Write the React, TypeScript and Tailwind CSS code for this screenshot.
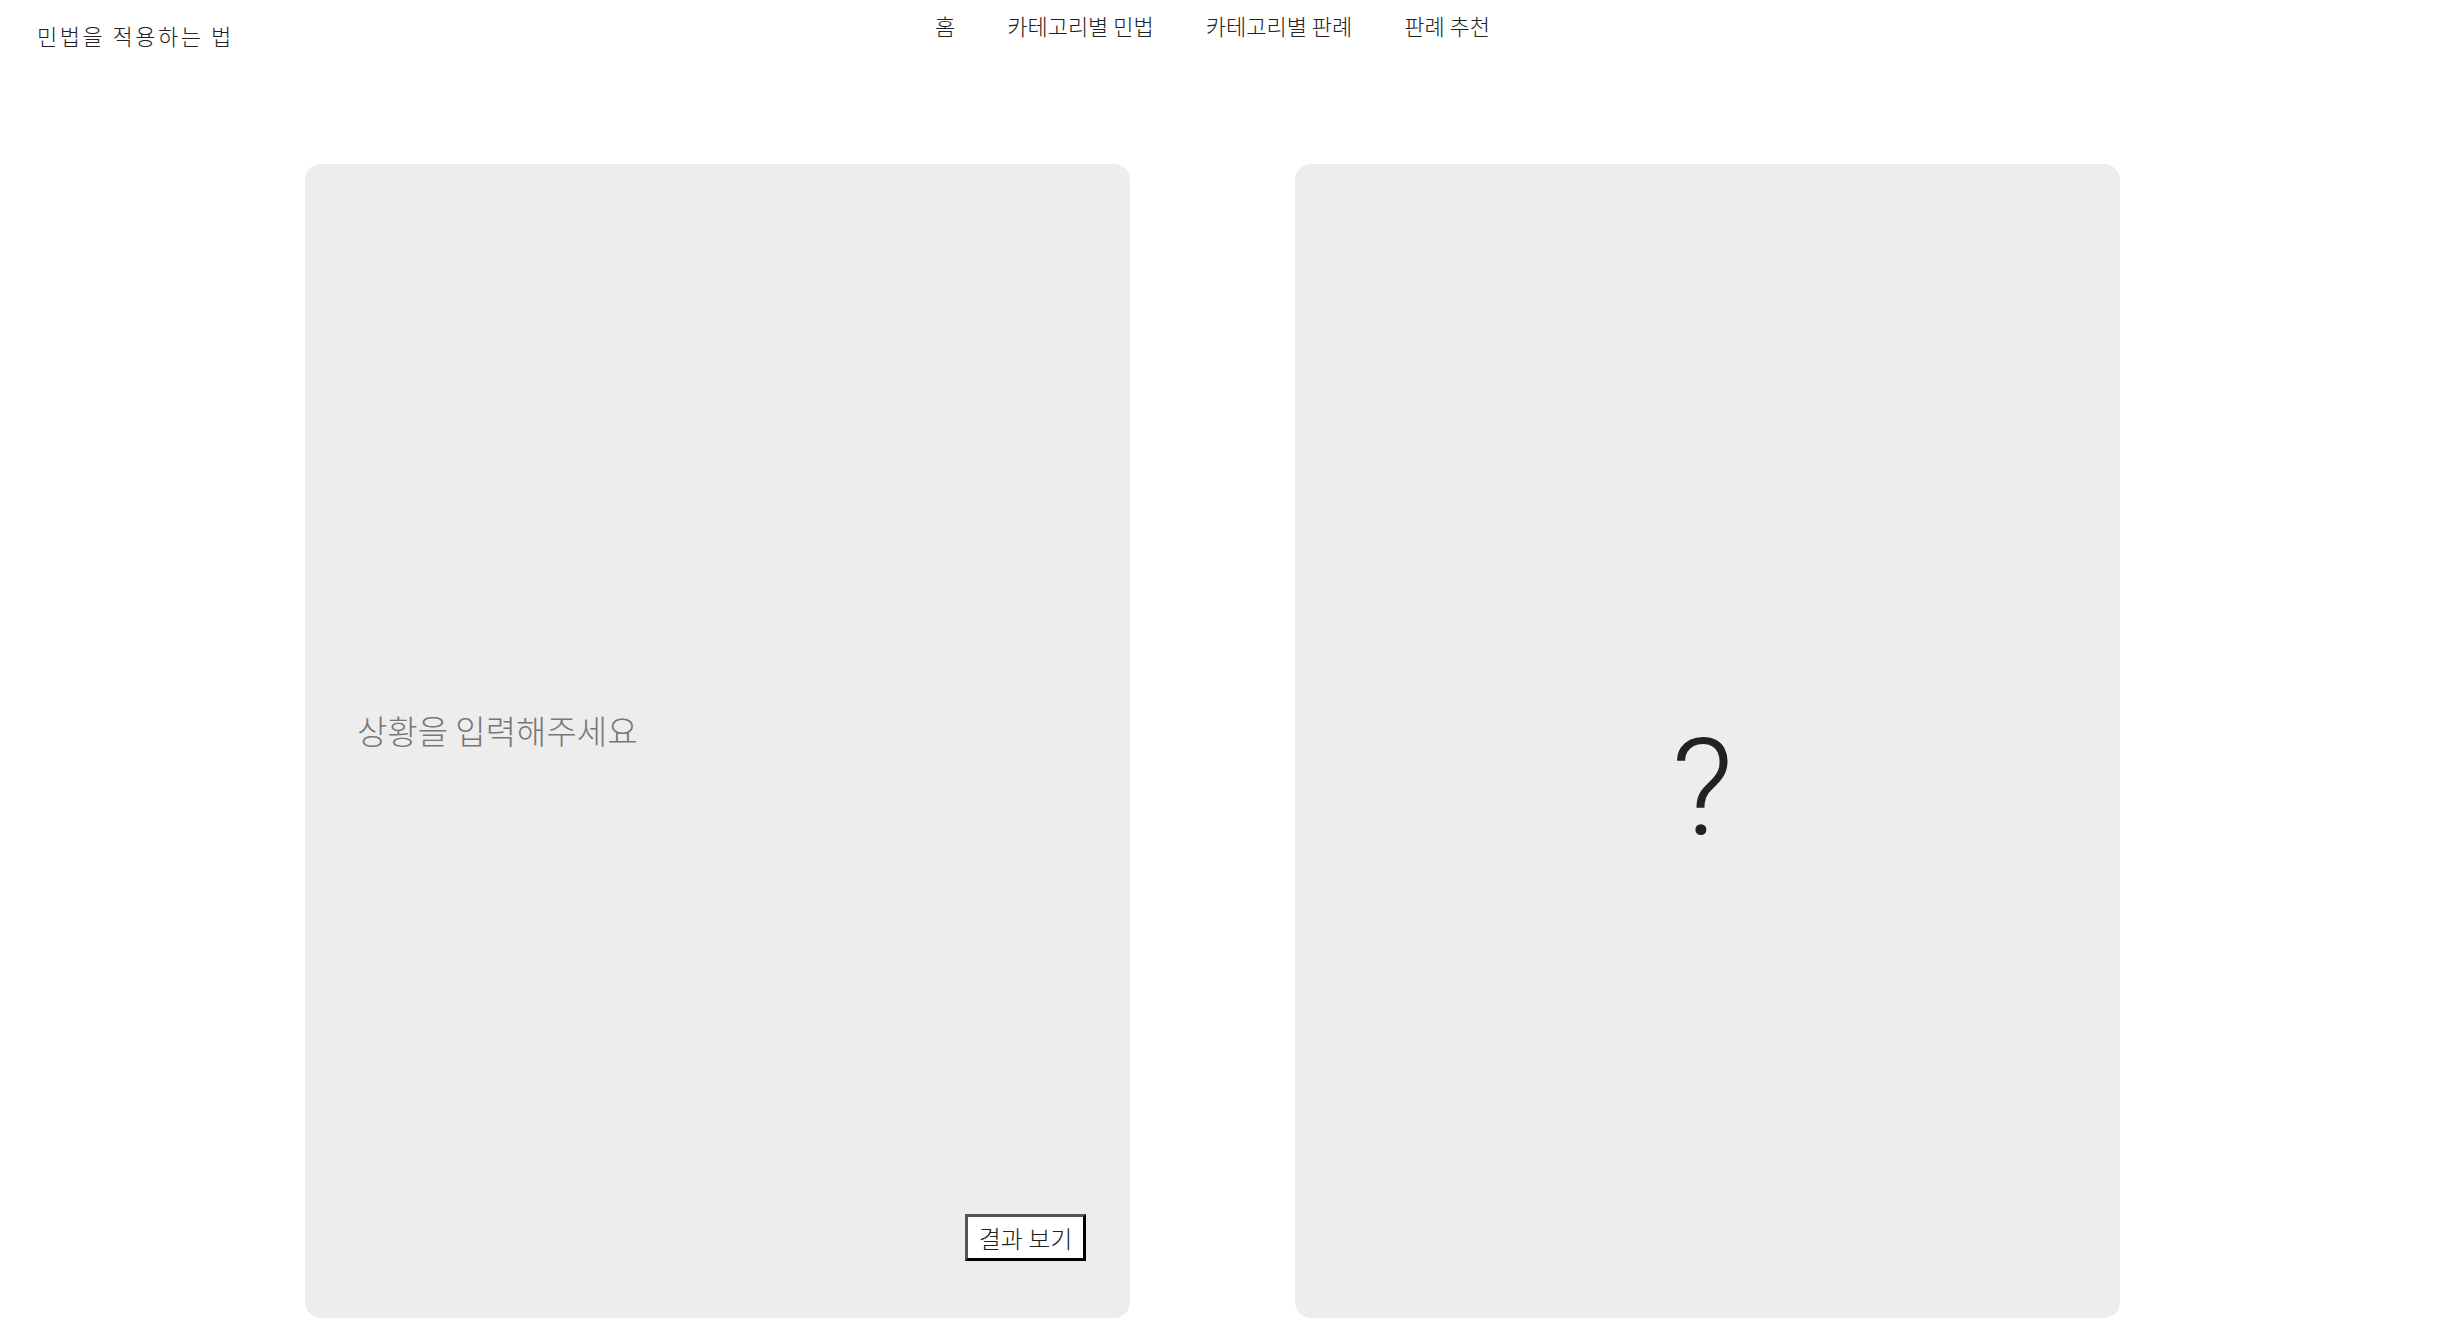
import React, { useState } from "react";

const navItems = ["홈", "카테고리별 민법", "카테고리별 판례", "판례 추천"];

export default function App() {
  const [situation, setSituation] = useState("");

  return (
    <div className="w-[2425px] bg-white text-[#222] font-['Noto_Sans_CJK_KR',sans-serif]">
      {/* 상단 헤더 */}
      <header className="h-[164px] grid grid-cols-[1fr_auto_1fr] items-start">
        <div className="pl-[37px] pt-[20px] text-[22px] leading-[30px] tracking-[2.5px] font-light">
          민법을 적용하는 법
        </div>
        <nav className="flex items-center gap-[52px] pt-[10px] text-[22px] leading-[30px] font-light">
          {navItems.map((item) => (
            <a key={item} className="cursor-pointer">
              {item}
            </a>
          ))}
        </nav>
        <div />
      </header>

      <main className="flex justify-center gap-[165px]">
        {/* 입력 카드 */}
        <section className="w-[825px] h-[1154px] rounded-2xl bg-[#ededed] flex flex-col">
          <textarea
            value={situation}
            onChange={(e) => setSituation(e.target.value)}
            placeholder="상황을 입력해주세요"
            className="flex-1 w-full resize-none bg-transparent outline-none pt-[544px] pl-[52px] pr-[52px] text-[33px] leading-[44px] font-light text-[#333] placeholder:text-[#777]"
          />
          <button className="self-end mr-[44px] mb-[57px] w-[121px] h-[47px] bg-white border-[3px] border-t-[#555] border-l-[#555] border-r-black border-b-black text-[24px] leading-none font-light text-[#222]">
            결과 보기
          </button>
        </section>

        {/* 결과 카드 */}
        <section className="w-[825px] h-[1154px] rounded-2xl bg-[#ededed] flex items-center justify-center pt-[94px] pr-[10px]">
          <span className="font-['Roboto',sans-serif] font-light text-[136px] leading-none text-[#222]">
            ?
          </span>
        </section>
      </main>
    </div>
  );
}
